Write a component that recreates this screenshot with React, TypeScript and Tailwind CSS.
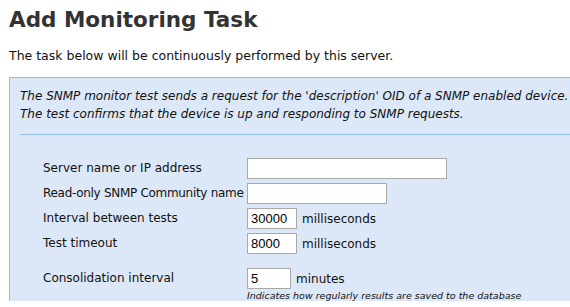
import React from "react";

const font = { fontFamily: '"DejaVu Sans", Verdana, sans-serif' };

function Row({ label, children, className = "", labelClass = "" }: { label: string; children: React.ReactNode; className?: string; labelClass?: string }) {
  return (
    <div className={`flex ${className}`}>
      <div className={`w-[204px] shrink-0 whitespace-nowrap text-[12px] leading-[21px] text-[#111] ${labelClass}`}>{label}</div>
      <div className="flex flex-col">{children}</div>
    </div>
  );
}

function Input({ w, value = "" }: { w: string; value?: string }) {
  return (
    <input
      readOnly
      value={value}
      className={`${w} h-[21px] border border-[#a9a9a9] bg-white px-[3px] text-[13px] text-black outline-none`}
      style={{ fontFamily: '"Liberation Sans", Arial, sans-serif' }}
    />
  );
}

export default function App() {
  return (
    <div className="w-[570px] h-[307px] overflow-hidden bg-white" style={font}>
      <h1 className="pl-[9px] pt-[7px] text-[21.5px] font-bold leading-[26px] text-[#333]">Add Monitoring Task</h1>
      <p className="pl-[9px] mt-[15px] text-[12.5px] leading-[15px] text-[#111]">
        The task below will be continuously performed by this server.
      </p>
      <div className="ml-[9px] mt-[14px] w-[600px] border-l border-t border-[#8fbfec] bg-[#dce8f7]">
        <div className="mx-[10px] border-b border-[#8fbfec] pb-[11px] pt-[9px] text-[12px] italic leading-[18px] text-[#111]">
          <div className="whitespace-nowrap">The SNMP monitor test sends a request for the 'description' OID of a SNMP enabled device.</div>
          <div className="whitespace-nowrap">The test confirms that the device is up and responding to SNMP requests.</div>
        </div>
        <div className="pl-[33px] pt-[23px] flex flex-col gap-[4px]">
          <Row label="Server name or IP address">
            <Input w="w-[200px]" />
          </Row>
          <Row label="Read-only SNMP Community name" labelClass="tracking-[-0.3px]">
            <Input w="w-[140px]" />
          </Row>
          <Row label="Interval between tests">
            <div className="flex items-center">
              <Input w="w-[50px]" value="30000" />
              <span className="ml-[5px] text-[12px] text-[#111]">milliseconds</span>
            </div>
          </Row>
          <Row label="Test timeout">
            <div className="flex items-center">
              <Input w="w-[50px]" value="8000" />
              <span className="ml-[5px] text-[12px] text-[#111]">milliseconds</span>
            </div>
          </Row>
          <Row label="Consolidation interval" className="mt-[10px]">
            <div className="flex items-center">
              <Input w="w-[44px]" value="5" />
              <span className="ml-[5px] text-[12px] text-[#111]">minutes</span>
            </div>
            <div className="whitespace-nowrap text-[9.5px] italic leading-[11px] mt-[1px] text-[#111]">
              Indicates how regularly results are saved to the database
            </div>
          </Row>
        </div>
      </div>
    </div>
  );
}
